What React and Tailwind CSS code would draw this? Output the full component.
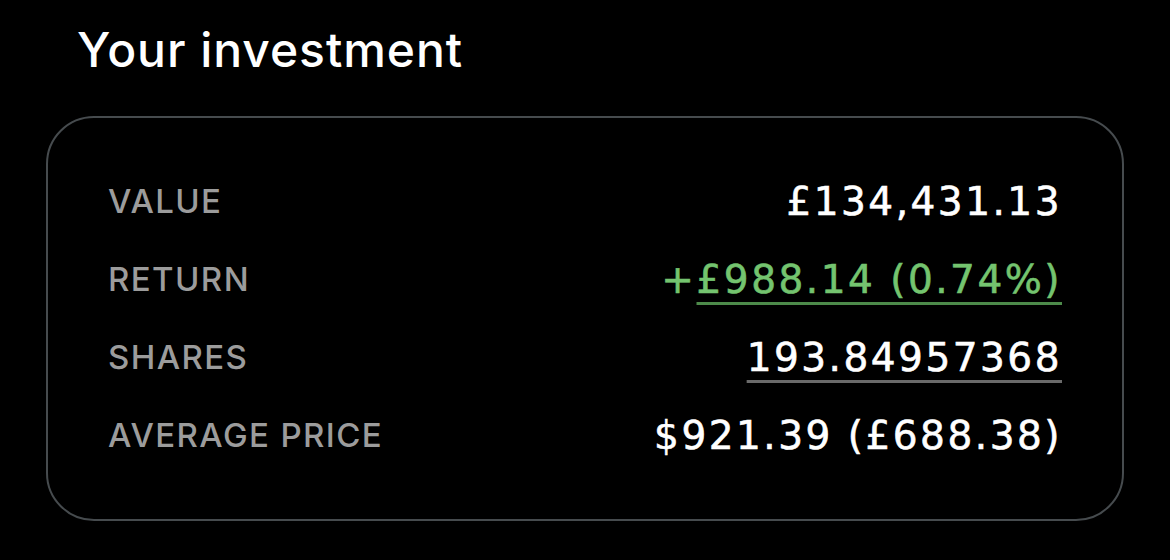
export default function App() {
  const num = "font-['DejaVu_Sans',sans-serif] text-[39px] tracking-[2.5px] leading-none [-webkit-text-stroke:0.6px]";
  const label = "font-['Inter',sans-serif] font-medium text-[33px] tracking-[1.4px] text-[#9c9c9c] leading-none";
  return (
    <div className="w-[1170px] h-[560px] bg-black overflow-hidden">
      <h1 className="pt-[27px] pl-[77px] text-[48px] leading-[46px] tracking-[0.95px] text-white font-['Inter',sans-serif] font-medium">
        Your investment
      </h1>
      <div className="mt-[43px] ml-[46px] w-[1078px] h-[405px] rounded-[48px] border-2 border-[#464b4e] pl-[60px] pr-[60px] py-[45px] flex flex-col">
        <div className="h-[78px] flex items-center justify-between">
          <span className={label}>VALUE</span>
          <span className={`${num} text-white`}>£134,431.13</span>
        </div>
        <div className="h-[78px] flex items-center justify-between">
          <span className={label}>RETURN</span>
          <span className={`${num} text-[#74c46f]`}>
            +<span className="underline decoration-[#4d8a4a] decoration-[3px] underline-offset-[9px]">£988.14 (0.74%)</span>
          </span>
        </div>
        <div className="h-[78px] flex items-center justify-between">
          <span className={label}>SHARES</span>
          <span className={`${num} text-white underline decoration-[#6a6a6a] decoration-[3px] underline-offset-[9px]`}>193.84957368</span>
        </div>
        <div className="h-[78px] flex items-center justify-between">
          <span className={label}>AVERAGE PRICE</span>
          <span className={`${num} text-white`}>$921.39 (£688.38)</span>
        </div>
      </div>
    </div>
  );
}
